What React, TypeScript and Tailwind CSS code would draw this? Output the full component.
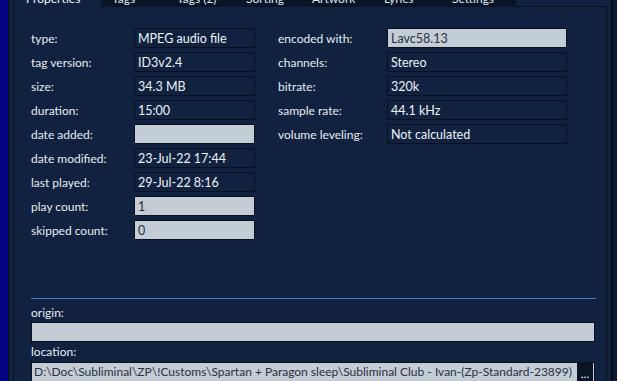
import React from "react";

interface Field {
    label: string;
    value: string;
    editable?: boolean;
}

const leftFields: Field[] = [
    { label: "type:", value: "MPEG audio file" },
    { label: "tag version:", value: "ID3v2.4" },
    { label: "size:", value: "34.3 MB" },
    { label: "duration:", value: "15:00" },
    { label: "date added:", value: "", editable: true },
    { label: "date modified:", value: "23-Jul-22 17:44" },
    { label: "last played:", value: "29-Jul-22 8:16" },
    { label: "play count:", value: "1", editable: true },
    { label: "skipped count:", value: "0", editable: true },
];

const rightFields: Field[] = [
    { label: "encoded with:", value: "Lavc58.13", editable: true },
    { label: "channels:", value: "Stereo" },
    { label: "bitrate:", value: "320k" },
    { label: "sample rate:", value: "44.1 kHz" },
    { label: "volume leveling:", value: "Not calculated" },
];

const tabs = [
    { name: "Tags", w: "w-[65px]" },
    { name: "Tags (2)", w: "w-[69px]" },
    { name: "Sorting", w: "w-[66px]" },
    { name: "Artwork", w: "w-[72px]" },
    { name: "Lyrics", w: "w-[68px]" },
    { name: "Settings", w: "w-[75px]" },
];

// Value box: dark read-only or light editable
const ValueBox: React.FC<{ field: Field; className: string }> = ({ field, className }) => (
    <div
        className={`h-[20px] border border-[#07101f] px-[3px] pt-[2px] flex items-center leading-none whitespace-nowrap overflow-hidden text-[12.5px] ${className} ${
            field.editable ? "bg-[#c4ccd6] text-[#2b3140]" : "bg-[#10223f] text-[#eef2f7]"
        }`}
    >
        {field.value}
    </div>
);

const App: React.FC = () => {
    return (
        <div
            className="w-[617px] h-[381px] overflow-hidden flex bg-[#10223f] text-[12px] text-[#e6ebf2]"
            style={{ fontFamily: "Lato, 'Noto Sans', sans-serif" }}
        >
            <div className="w-[8px] bg-[#040482] shrink-0" />
            <div className="w-[1px] bg-[#08101e] shrink-0" />
            <div className="w-[4px] shrink-0" />
            <div className="w-[1px] bg-[#08101e] shrink-0" />

            {/* main panel */}
            <div className="w-[593px] flex flex-col shrink-0">
                {/* tab strip, mostly scrolled off the top */}
                <div className="flex h-[7px] overflow-visible">
                    <div className="w-[87px] h-[22px] -mt-[15px] pl-[12px] flex items-end leading-[16px] text-[#f2f5fa]">
                        Properties
                    </div>
                    {tabs.map((t) => (
                        <div
                            key={t.name}
                            className={`${t.w} h-[22px] -mt-[15px] pl-[11px] flex items-end leading-[16px] bg-[#0a1426] text-[#dfe5ee]`}
                        >
                            {t.name}
                        </div>
                    ))}
                    <div className="flex-1 flex flex-col justify-end">
                        <div className="h-[1px] bg-[#08101e]" />
                    </div>
                </div>

                <div className="flex-1 pl-[17px] pt-[21px] border-r border-[#08101e]">
                    <div className="flex">
                        <div className="flex flex-col gap-[4px]">
                            {leftFields.map((f) => (
                                <div key={f.label} className="flex items-center">
                                    <div className="w-[103px] whitespace-nowrap pt-[2px]">{f.label}</div>
                                    <ValueBox field={f} className="w-[121px]" />
                                </div>
                            ))}
                        </div>
                        <div className="flex flex-col gap-[4px] ml-[23px]">
                            {rightFields.map((f) => (
                                <div key={f.label} className="flex items-center">
                                    <div className="w-[109px] whitespace-nowrap pt-[2px]">{f.label}</div>
                                    <ValueBox field={f} className="w-[180px]" />
                                </div>
                            ))}
                        </div>
                    </div>

                    <div className="mt-[58px] w-[565px] h-[1px] bg-[#3a7ddb]" />

                    <div className="mt-[6px] h-[16px] leading-[16px]">origin:</div>
                    <div className="mt-[1px] w-[564px] h-[20px] border border-[#07101f] bg-[#c4ccd6]" />

                    <div className="mt-[2px] h-[16px] leading-[16px]">location:</div>
                    <div className="mt-[2px] w-[564px] h-[20px] border border-[#07101f] bg-[#c4ccd6] flex items-center text-[#2b3140] overflow-hidden">
                        <div className="flex-1 px-[2px] whitespace-nowrap overflow-hidden">
                            D:\Doc\Subliminal\ZP\!Customs\Spartan + Paragon sleep\Subliminal Club - Ivan-(Zp-Standard-23899)
                        </div>
                        <div className="w-[16px] h-full bg-[#0a1426] text-[#f2f5fa] flex items-end justify-center pb-[1px] leading-none mr-[1px] shrink-0">
                            ...
                        </div>
                    </div>
                </div>
            </div>

            <div className="w-[4px] shrink-0" />
            <div className="w-[2px] bg-[#050a14] shrink-0" />
            <div className="flex-1 bg-[#0c1830]" />
        </div>
    );
};

export default App;
